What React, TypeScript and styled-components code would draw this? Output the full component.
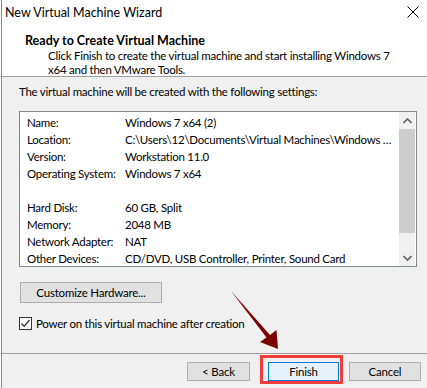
import React from "react";
import styled, { createGlobalStyle } from "styled-components";

const GlobalStyle = createGlobalStyle`
  html, body {
    margin: 0;
    padding: 0;
    background: #ffffff;
  }
  body {
    font-family: Lato, "Noto Sans", "Liberation Sans", sans-serif;
    font-size: 11.5px;
    letter-spacing: -0.25px;
    color: #000;
  }
`;

const rows = [
  { label: "Name:", value: "Windows 7 x64 (2)" },
  { label: "Location:", value: "C:\\Users\\12\\Documents\\Virtual Machines\\Windows 7 x64 (2)" },
  { label: "Version:", value: "Workstation 11.0" },
  { label: "Operating System:", value: "Windows 7 x64" },
  { label: "", value: "" },
  { label: "Hard Disk:", value: "60 GB, Split" },
  { label: "Memory:", value: "2048 MB" },
  { label: "Network Adapter:", value: "NAT" },
  { label: "Other Devices:", value: "CD/DVD, USB Controller, Printer, Sound Card" },
];

const App = () => {
  return (
    <>
      <GlobalStyle />
      <Window>
        <TitleBar>
          <span>New Virtual Machine Wizard</span>
          <CloseIcon width="12" height="12" viewBox="0 0 12 12">
            <path d="M0.5 0.5 L11.5 11.5 M11.5 0.5 L0.5 11.5" stroke="#000" strokeWidth="1" />
          </CloseIcon>
        </TitleBar>
        <Header>
          <HeaderTitle>Ready to Create Virtual Machine</HeaderTitle>
          <HeaderText>
            Click Finish to create the virtual machine and start installing Windows 7 x64 and then VMware Tools.
          </HeaderText>
        </Header>
        <Body>
          <Intro>The virtual machine will be created with the following settings:</Intro>
          <ListBox>
            <ListRows>
              {rows.map((r, i) => (
                <Row key={i}>
                  <Label>{r.label}</Label>
                  <Value>{r.value}</Value>
                </Row>
              ))}
            </ListRows>
            <ScrollBar>
              <ScrollArrow>
                <svg width="9" height="6" viewBox="0 0 9 6">
                  <path d="M0.5 5 L4.5 1 L8.5 5" fill="none" stroke="#606060" strokeWidth="1.6" />
                </svg>
              </ScrollArrow>
              <Track>
                <Thumb />
              </Track>
              <ScrollArrow>
                <svg width="9" height="6" viewBox="0 0 9 6">
                  <path d="M0.5 1 L4.5 5 L8.5 1" fill="none" stroke="#606060" strokeWidth="1.6" />
                </svg>
              </ScrollArrow>
            </ScrollBar>
          </ListBox>
          <CustomizeButton>Customize Hardware...</CustomizeButton>
          <CheckRow>
            <CheckBox>
              <svg width="11" height="11" viewBox="0 0 11 11">
                <path d="M1.5 5.5 L4.2 8.3 L9.5 2" fill="none" stroke="#333" strokeWidth="1.3" />
              </svg>
            </CheckBox>
            <span>Power on this virtual machine after creation</span>
          </CheckRow>
        </Body>
        <Footer>
          <WizardButton $width={63}>&lt; Back</WizardButton>
          <Highlight>
            <WizardButton $width={71} $primary>
              Finish
            </WizardButton>
          </Highlight>
          <WizardButton $width={72}>Cancel</WizardButton>
        </Footer>
        <Arrow width="60" height="65" viewBox="0 0 60 65">
          <path d="M1 1 L36.5 47.5 L30 52 L48 59 L46.5 40 L40 45 Z" fill="#7a0000" />
        </Arrow>
      </Window>
    </>
  );
};

const Window = styled.div`
  position: relative;
  width: 426px;
  height: 388px;
  margin-left: 1px;
  border-left: 1px solid #8a8a8a;
  display: flex;
  flex-direction: column;
  overflow: hidden;
  background: #f0f0f0;
`;

const TitleBar = styled.div`
  height: 24px;
  background: #fff;
  display: flex;
  align-items: center;
  justify-content: space-between;
  padding: 0 9px 0 3px;
  font-size: 12.5px;
  letter-spacing: 0;
`;

const CloseIcon = styled.svg`
  display: block;
`;

const Header = styled.div`
  height: 53px;
  background: #fff;
  border-bottom: 1px solid #a0a0a0;
  padding: 9px 0 0 23px;
  box-sizing: border-box;
`;

const HeaderTitle = styled.div`
  font-weight: bold;
  font-size: 12.5px;
  letter-spacing: 0;
  line-height: 15px;
`;

const HeaderText = styled.div`
  margin: 1px 0 0 23px;
  width: 345px;
  line-height: 14px;
`;

const Body = styled.div`
  flex: 1;
  padding: 7px 0 0 17px;
  display: flex;
  flex-direction: column;
  align-items: flex-start;
`;

const Intro = styled.div`
  line-height: 15px;
`;

const ListBox = styled.div`
  margin-top: 12px;
  width: 398px;
  height: 156px;
  box-sizing: border-box;
  border: 1px solid #828790;
  background: #fff;
  display: flex;
`;

const ListRows = styled.div`
  flex: 1;
  min-width: 0;
  padding: 2px 0 0 7px;
`;

const Row = styled.div`
  display: flex;
  height: 17px;
  align-items: center;
  white-space: nowrap;
`;

const Label = styled.div`
  width: 98px;
  flex: none;
`;

const Value = styled.div`
  flex: 1;
  min-width: 0;
  overflow: hidden;
  text-overflow: ellipsis;
  padding-right: 6px;
`;

const ScrollBar = styled.div`
  width: 16px;
  margin-right: 1px;
  background: #f0f0f0;
  display: flex;
  flex-direction: column;
`;

const ScrollArrow = styled.div`
  height: 17px;
  display: flex;
  align-items: center;
  justify-content: center;
`;

const Track = styled.div`
  flex: 1;
`;

const Thumb = styled.div`
  height: 104px;
  background: #cdcdcd;
`;

const ButtonBase = styled.button`
  font-family: inherit;
  font-size: 11.5px;
  letter-spacing: -0.2px;
  color: #000;
  background: #e1e1e1;
  border: 1px solid #adadad;
  padding: 0;
  box-sizing: border-box;
`;

const CustomizeButton = styled(ButtonBase)`
  margin: 15px 0 0 1px;
  width: 142px;
  height: 21px;
`;

const CheckRow = styled.div`
  margin-top: 14px;
  display: flex;
  align-items: center;
  gap: 4px;
`;

const CheckBox = styled.div`
  width: 13px;
  height: 13px;
  box-sizing: border-box;
  border: 1px solid #333;
  background: #fff;
  display: flex;
  align-items: center;
  justify-content: center;
`;

const Footer = styled.div`
  height: 35px;
  box-sizing: border-box;
  border-top: 1px solid #a0a0a0;
  display: flex;
  align-items: flex-start;
  justify-content: flex-end;
  padding: 8px 7px 0 0;
`;

const WizardButton = styled(ButtonBase)<{ $width: number; $primary?: boolean }>`
  width: ${(p) => p.$width}px;
  height: 19px;
  background: ${(p) => (p.$primary ? "#e5f1fb" : "#e1e1e1")};
  border-color: ${(p) => (p.$primary ? "#0078d7" : "#adadad")};
`;

const Highlight = styled.div`
  position: relative;
  margin: 0 10px 0 18px;
  &::before {
    content: "";
    position: absolute;
    left: -8px;
    top: -7px;
    right: -4px;
    bottom: -3px;
    border: 3px solid #f03c3c;
    pointer-events: none;
  }
`;

const Arrow = styled.svg`
  position: absolute;
  left: 228px;
  top: 290px;
`;

export default App;
